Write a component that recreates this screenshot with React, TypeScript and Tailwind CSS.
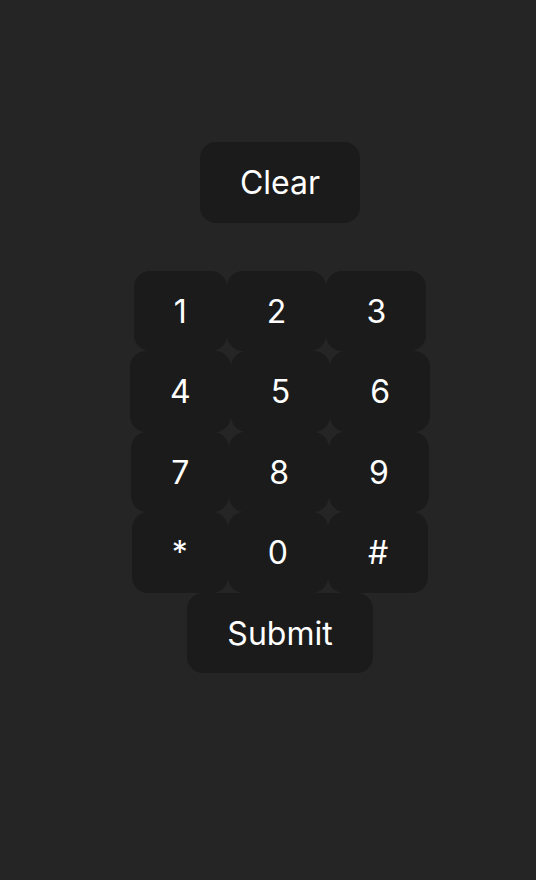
import React from "react";

const rows = [
  ["1", "2", "3"],
  ["4", "5", "6"],
  ["7", "8", "9"],
  ["*", "0", "#"],
];

function Key({ label }: { label: string }) {
  return (
    <button className="bg-[#1b1b1b] text-white rounded-2xl px-10 pt-[21px] pb-[19.5px] text-[32px] leading-10 font-normal">
      {label}
    </button>
  );
}

export default function App() {
  return (
    <div
      className="min-h-screen w-full bg-[#252525] pl-6 pt-[142px] flex flex-col items-center"
      style={{ fontFamily: "Inter, 'Noto Sans', sans-serif" }}
    >
      <Key label="Clear" />
      <div className="mt-12 flex flex-col items-center">
        {rows.map((r, i) => (
          <div key={i} className="flex justify-center">
            {r.map((k) => (
              <Key key={k} label={k} />
            ))}
          </div>
        ))}
        <Key label="Submit" />
      </div>
    </div>
  );
}
